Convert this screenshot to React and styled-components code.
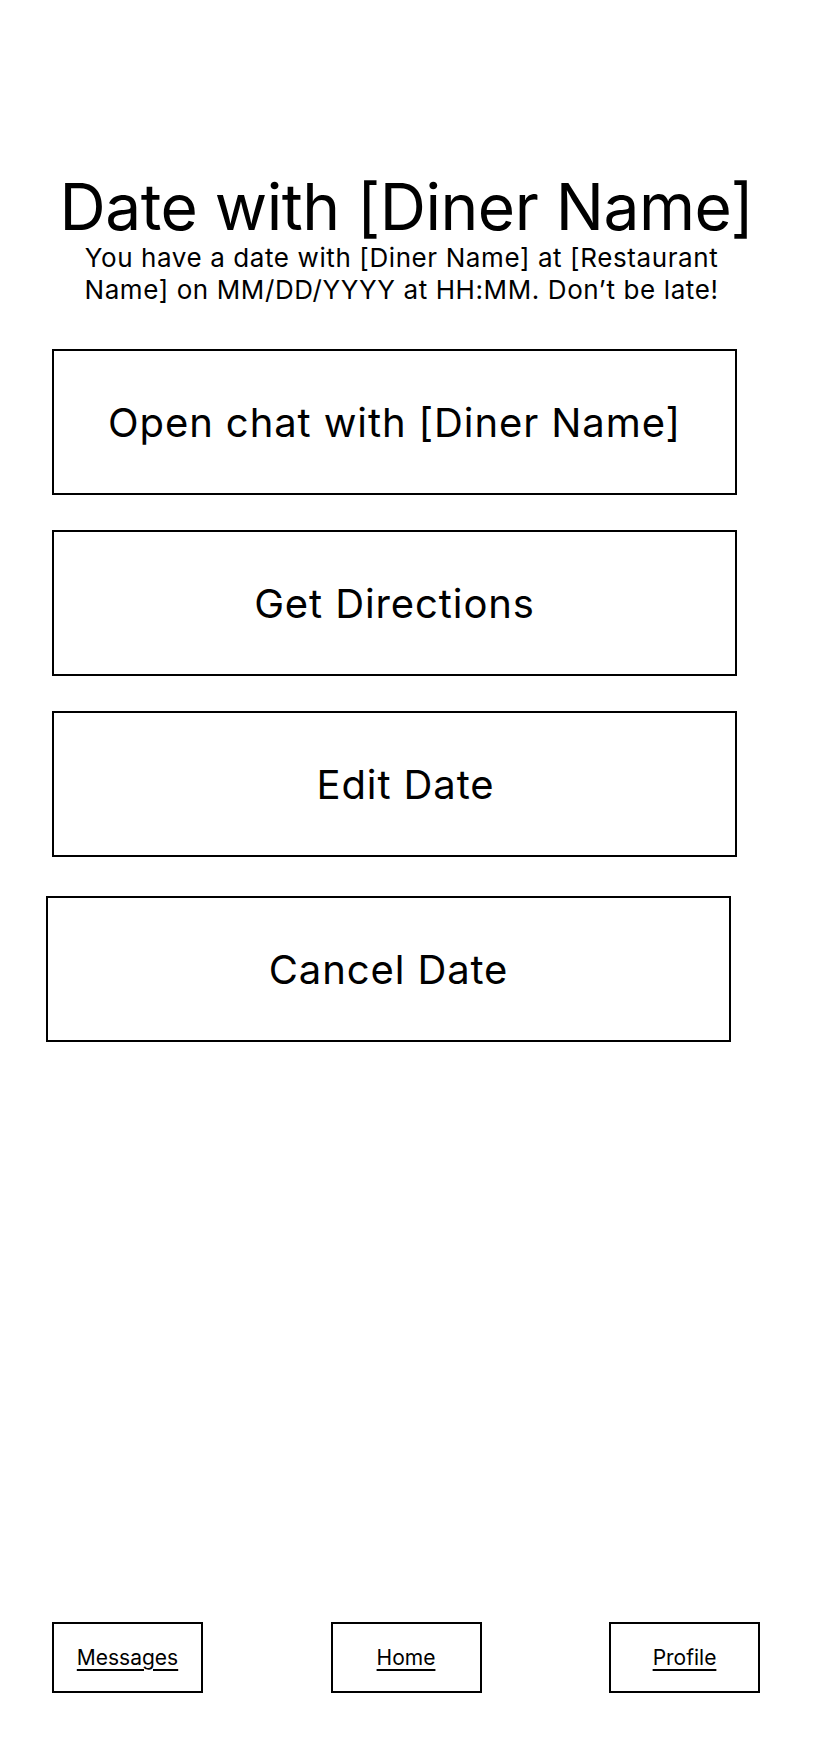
import React from 'react';
import styled, { createGlobalStyle } from 'styled-components';

const GlobalStyle = createGlobalStyle`
  html, body {
    margin: 0;
    padding: 0;
    background: #ffffff;
  }

  body {
    font-family: Inter, 'Noto Sans', sans-serif;
    color: #000000;
  }
`;

const StyledPage = styled.div`
  min-height: 100vh;
  display: flex;
  flex-direction: column;
  box-sizing: border-box;
  padding-top: 172px;
  padding-bottom: 65px;
`;

const StyledHeader = styled.header`
  display: flex;
  flex-direction: column;
  align-items: center;
  text-align: center;
`;

const StyledTitle = styled.h1`
  margin: 0;
  font-size: 64px;
  font-weight: 400;
  line-height: 70px;
  letter-spacing: -0.5px;
`;

const StyledIntro = styled.p`
  margin: 0 10px 0 0;
  max-width: 700px;
  font-size: 26px;
  line-height: 32px;
  letter-spacing: 0.6px;
`;

const StyledActions = styled.div`
  display: flex;
  flex-direction: column;
  gap: 35px;
  margin-top: 43px;
  padding-left: 52px;
`;

const StyledAction = styled.button`
  box-sizing: border-box;
  width: 685px;
  height: 146px;
  margin-left: ${({ $shift }) => $shift || 0}px;
  margin-top: ${({ $extra }) => $extra || 0}px;
  padding: 0 0 0 ${({ $textShift }) => $textShift || 0}px;
  border: 2px solid #000000;
  background: #ffffff;
  font-family: Inter, 'Noto Sans', sans-serif;
  font-size: 40px;
  font-weight: 400;
  letter-spacing: 0.9px;
  color: #000000;
  cursor: pointer;
`;

const StyledNav = styled.nav`
  margin-top: auto;
  display: flex;
  justify-content: space-between;
  padding: 0 53px 0 52px;
`;

const StyledNavItem = styled.a`
  box-sizing: border-box;
  width: 151px;
  height: 71px;
  display: flex;
  align-items: center;
  justify-content: center;
  border: 2px solid #000000;
  font-size: 21px;
  color: #000000;
  text-decoration: underline;
  text-underline-offset: 4px;
`;

const actions = [
  { label: 'Open chat with [Diner Name]' },
  { label: 'Get Directions' },
  { label: 'Edit Date', textShift: 22 },
  { label: 'Cancel Date', shift: -6, extra: 4 },
];

const navItems = ['Messages', 'Home', 'Profile'];

const App = () => {
  return (
    <>
      <GlobalStyle />
      <StyledPage>
        <StyledHeader>
          <StyledTitle>Date with [Diner Name]</StyledTitle>
          <StyledIntro>
            You have a date with [Diner Name] at [Restaurant Name] on
            MM/DD/YYYY at HH:MM. Don’t be late!
          </StyledIntro>
        </StyledHeader>
        <StyledActions>
          {actions.map(action => (
            <StyledAction
              key={action.label}
              type="button"
              $shift={action.shift}
              $extra={action.extra}
              $textShift={action.textShift}
            >
              {action.label}
            </StyledAction>
          ))}
        </StyledActions>
        <StyledNav>
          {navItems.map(item => (
            <StyledNavItem key={item} href="#">
              {item}
            </StyledNavItem>
          ))}
        </StyledNav>
      </StyledPage>
    </>
  );
};

export default App;
